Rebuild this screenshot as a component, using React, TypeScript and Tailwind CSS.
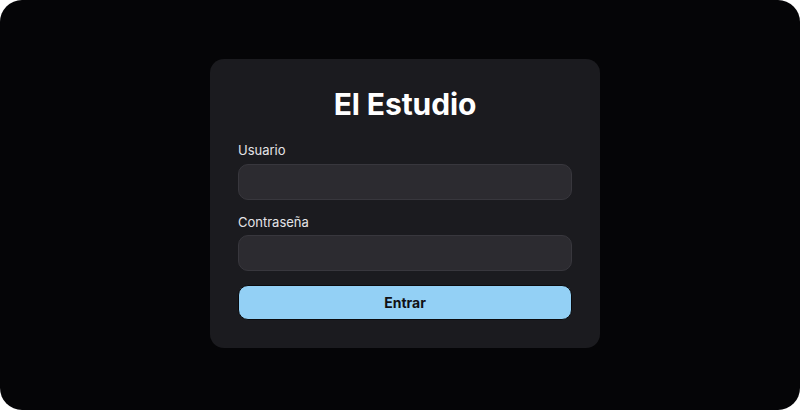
export default function App() {
  return (
    <div className="bg-white">
      <div
        className="w-[800px] h-[410px] rounded-[22px] bg-[#050507] flex items-center justify-center pl-[10px] pb-[3px]"
        style={{ fontFamily: "Inter, 'Noto Sans', sans-serif" }}
      >
        <div className="w-[390px] rounded-[14px] bg-[#1b1b1f] px-[28px] pt-[26px] pb-[28px] flex flex-col">
          <h1 className="text-center text-[30px] leading-[38px] font-bold text-white tracking-[-0.1px]">El Estudio</h1>
          <label className="mt-[19px] text-[13px] leading-[16px] text-[#e4e4e7]">Usuario</label>
          <div className="mt-[6px] h-[36px] rounded-[10px] bg-[#2c2b30] border border-[#38373d]" />
          <label className="mt-[14px] text-[13px] leading-[16px] text-[#e4e4e7]">Contraseña</label>
          <div className="mt-[5px] h-[36px] rounded-[10px] bg-[#2c2b30] border border-[#38373d]" />
          <button className="mt-[14px] h-[35px] rounded-[10px] bg-[#93d0f5] border border-[#0b0b0d] text-[14px] font-bold text-[#111114]">
            Entrar
          </button>
        </div>
      </div>
    </div>
  );
}
